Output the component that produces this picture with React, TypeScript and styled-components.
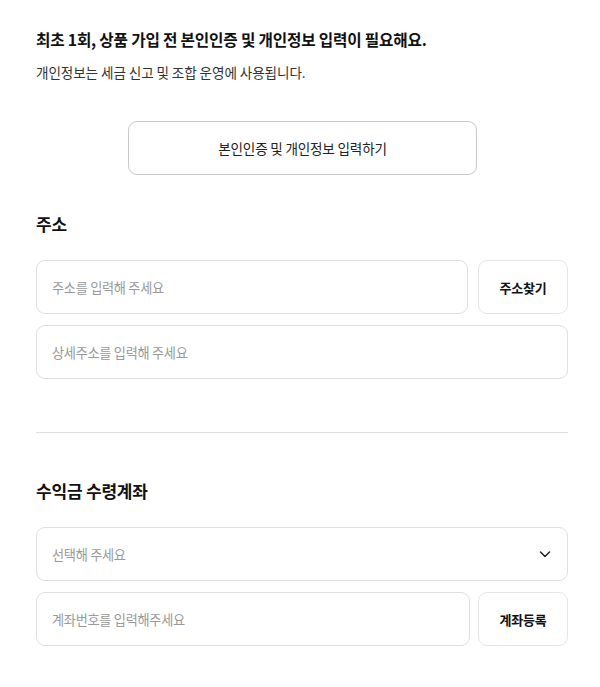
import styled, { createGlobalStyle } from 'styled-components'

const GlobalStyle = createGlobalStyle`
  html, body {
    margin: 0;
    padding: 0;
    background: #fff;
  }
  body {
    font-family: 'Noto Sans CJK KR', 'Noto Sans', sans-serif;
    color: #111;
  }
  * {
    box-sizing: border-box;
  }
`

const Page = styled.div`
  width: 600px;
  padding: 28px 32px 40px 36px;
`

const Title = styled.h1`
  margin: 0;
  font-size: 15.7px;
  font-weight: 700;
  letter-spacing: -0.2px;
  line-height: 24px;
  color: #111;
`

const Desc = styled.p`
  margin: 10px 0 0;
  font-size: 13.6px;
  letter-spacing: -0.1px;
  line-height: 20px;
  color: #333;
`

const VerifyButton = styled.button`
  display: block;
  margin: 39px 0 0 92px;
  width: 349px;
  height: 54px;
  border: 1px solid #c9c9c9;
  border-radius: 9px;
  background: #fff;
  font-family: inherit;
  font-size: 13.6px;
  letter-spacing: -0.2px;
  color: #222;
`

const SectionTitle = styled.h2<{ $top: number }>`
  margin: ${p => p.$top}px 0 0;
  font-size: 17px;
  font-weight: 700;
  letter-spacing: -0.2px;
  line-height: 24px;
  color: #111;
`

const Fields = styled.div`
  display: flex;
  flex-direction: column;
  gap: 11px;
  margin-top: 24px;
`

const Row = styled.div<{ $gap: number }>`
  display: flex;
  gap: ${p => p.$gap}px;
`

const Input = styled.input`
  flex: 1 1 auto;
  width: 100%;
  min-width: 0;
  height: 54px;
  padding: 0 15px;
  border: 1px solid #e0e0e0;
  border-radius: 9px;
  font-family: inherit;
  font-size: 13.2px;
  letter-spacing: -0.3px;
  color: #222;
  outline: none;
  &::placeholder {
    color: #999;
  }
`

const SideButton = styled.button`
  flex: none;
  width: 90px;
  height: 54px;
  border: 1px solid #e6e6e6;
  border-radius: 9px;
  background: #fff;
  font-family: inherit;
  font-size: 13px;
  font-weight: 700;
  letter-spacing: -0.2px;
  color: #111;
`

const Select = styled.div`
  display: flex;
  align-items: center;
  justify-content: space-between;
  height: 54px;
  padding: 0 15px 0 15px;
  border: 1px solid #e0e0e0;
  border-radius: 9px;
  font-size: 13.2px;
  letter-spacing: -0.3px;
  color: #999;
`

const Divider = styled.hr`
  margin: 53px 0 0;
  border: none;
  border-top: 1px solid #dedede;
`

const Chevron = () => (
  <svg width="14" height="14" viewBox="0 0 14 14" fill="none">
    <path d="M2.5 5l4.5 4.5L11.5 5" stroke="#222" strokeWidth="1.5" strokeLinecap="round" strokeLinejoin="round" />
  </svg>
)

export default function App() {
  return (
    <Page>
      <GlobalStyle />
      <Title>최초 1회, 상품 가입 전 본인인증 및 개인정보 입력이 필요해요.</Title>
      <Desc>개인정보는 세금 신고 및 조합 운영에 사용됩니다.</Desc>
      <VerifyButton>본인인증 및 개인정보 입력하기</VerifyButton>

      <SectionTitle $top={37}>주소</SectionTitle>
      <Fields>
        <Row $gap={10}>
          <Input placeholder="주소를 입력해 주세요" />
          <SideButton>주소찾기</SideButton>
        </Row>
        <Input placeholder="상세주소를 입력해 주세요" />
      </Fields>

      <Divider />

      <SectionTitle $top={46}>수익금 수령계좌</SectionTitle>
      <Fields>
        <Select>
          <span>선택해 주세요</span>
          <Chevron />
        </Select>
        <Row $gap={8}>
          <Input placeholder="계좌번호를 입력해주세요" />
          <SideButton>계좌등록</SideButton>
        </Row>
      </Fields>
    </Page>
  )
}
